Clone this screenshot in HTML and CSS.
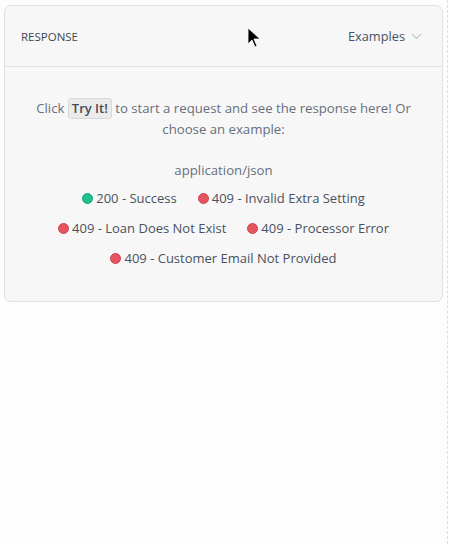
FILE: index.html
```html
<!DOCTYPE html>
<html>
<head>
<meta charset="utf-8">
<link rel="stylesheet" href="styles.css">
</head>
<body>
<div class="page">
  <section class="card">
    <header class="card-head">
      <span class="title">RESPONSE</span>
      <span class="examples">Examples
        <svg class="chev" width="11" height="7" viewBox="0 0 11 7"><path d="M1 1l4.5 4.5L10 1" fill="none" stroke="#c4c8ce" stroke-width="1.2"/></svg>
      </span>
    </header>
    <div class="card-body">
      <p class="intro">Click <span class="try">Try It!</span> to start a request and see the response here! Or choose an example:</p>
      <p class="mime">application/json</p>
      <ul class="examples-list">
        <li><span class="dot ok"></span>200 - Success</li>
        <li><span class="dot err"></span>409 - Invalid Extra Setting</li>
        <li><span class="dot err"></span>409 - Loan Does Not Exist</li>
        <li><span class="dot err"></span>409 - Processor Error</li>
        <li><span class="dot err"></span>409 - Customer Email Not Provided</li>
      </ul>
    </div>
  </section>
  <svg class="cursor" width="14" height="22" viewBox="0 0 14 22"><path d="M1 1v16l4-4 3 7 2-1-3-7h6z" fill="#000" stroke="#fff" stroke-width="0.8"/></svg>
</div>
</body>
</html>
```

FILE: styles.css
```css
html, body {
  margin: 0;
  padding: 0;
  background: #fdfdfd;
}
.page {
  position: relative;
  width: 448px;
  height: 544px;
  border-right: 1px dashed #dedede;
  padding: 5px 0 0 4px;
  box-sizing: border-box;
  font-family: "Open Sans", "Noto Sans", sans-serif;
}
.card {
  width: 439px;
  box-sizing: border-box;
  background: #f7f7f7;
  border: 1px solid #e1e1e1;
  border-radius: 7px;
}
.card-head {
  height: 61px;
  box-sizing: border-box;
  display: flex;
  align-items: center;
  justify-content: space-between;
  padding: 0 20px 0 16px;
  border-bottom: 1px solid #e1e1e1;
}
.title {
  font-size: 11.5px;
  color: #3f4651;
}
.examples {
  display: flex;
  align-items: center;
  gap: 6px;
  font-size: 12.8px;
  color: #4a5260;
}
.chev {
  margin-top: 1px;
}
.card-body {
  padding: 31px 10px 28px;
  text-align: center;
}
.intro {
  margin: 0 auto;
  width: 390px;
  font-size: 13.2px;
  line-height: 21px;
  color: #676f7d;
}
.try {
  display: inline-block;
  background: #ebebeb;
  border: 1px solid #d9d9d9;
  border-radius: 3px;
  padding: 0 3px;
  line-height: 19px;
  font-size: 13px;
  font-weight: 600;
  color: #454c57;
}
.mime {
  margin: 20px 0 2px;
  font-size: 13.2px;
  line-height: 21px;
  color: #676f7d;
}
.examples-list {
  list-style: none;
  margin: 0 auto;
  padding: 0;
  width: 360px;
  display: flex;
  flex-wrap: wrap;
  justify-content: center;
  column-gap: 21px;
}
.examples-list li {
  display: flex;
  align-items: center;
  gap: 3px;
  height: 30px;
  font-size: 13px;
  color: #4a515e;
}
.dot {
  width: 11px;
  height: 11px;
  border-radius: 50%;
  box-sizing: border-box;
}
.dot.ok {
  background: #1fbf8f;
  border: 1px solid #17a47a;
}
.dot.err {
  background: #e5545f;
  border: 1px solid #cc4550;
}
.cursor {
  position: absolute;
  left: 247px;
  top: 27px;
}
```
